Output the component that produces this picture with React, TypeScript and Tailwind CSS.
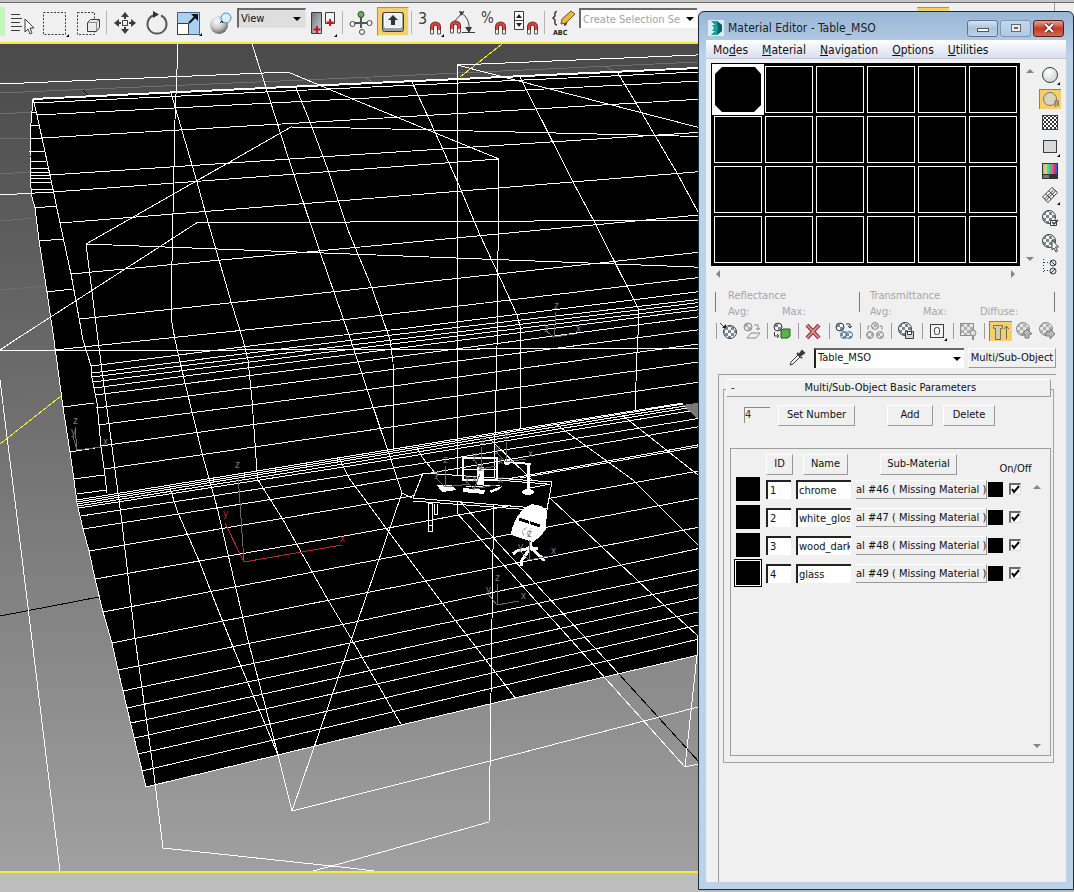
import { ReactNode } from "react";
import { twMerge } from "tailwind-merge";

const WALL_ROWS = [
  "33,103 350,88 720,71",
  "37,115 350,99 720,80",
  "42,138 350,120 720,98",
  "50,175 350,155 720,131",
  "60,223 350,200 720,170",
  "71,274 350,248 720,213",
  "80,319 350,290 720,250",
  "54,350 83,347 350,319 720,275",
  "91,366 306,339 400,329 720,289",
  "92,373 400,334 720,297",
  "92,377 400,339 720,300",
  "93,382 400,343 720,304",
  "94,388 400,348 720,307",
  "95,395 350,363 720,314",
  "96,408 350,375 720,327",
  "98,425 350,392 720,341",
  "101,446 350,411 720,359",
  "104,469 350,433 720,379",
];

const BAND_ROWS = [
  "77,500 350,456 683,403",
  "77,502 350,458 683,404",
  "77,504 350,460 685,406",
  "78,506 350,463 687,408",
  "79,508 350,466 690,411",
];

const FLOOR_ROWS = [
  "81,516 350,475 720,415",
  "83,529 350,487 720,423",
  "89,551 350,507 720,441",
  "520,478 720,443",
  "95,579 350,535 720,467",
  "103,612 350,565 720,494",
  "112,643 350,596 720,523",
  "118,670 350,623 720,544",
  "123,691 350,643 720,565",
  "127,708 350,660 720,580",
  "131,723 350,675 720,593",
  "135,738 350,690 720,607",
  "138,754 350,706 720,620",
  "142,771 350,722 720,634",
  "146,787 278,755 401,725 515,698 720,650",
];

const COLUMNS = [
  // wall
  "33,99 37,115 42,138 50,175 60,223 71,274 83,340 91,366 92,378 97,403 101,447 104,468 107,493",
  "171,93 197,182 208,222 219,260 232,305 243,340 248,360 252,400 257,472 258,480 282,518 328,600 352,640 402,726",
  "178,44 175,120 173,213 171,310 172,323 175,340 185,383 203,457 217,507 248,640 278,755 292,811",
  "296,88 310,122 328,170 348,230 372,288 390,340 393,362 394,449",
  "412,82 435,132 458,183 480,235 501,280 517,315 521,330 520,429",
  "520,77 573,182 595,223 638,308 639,317 637,353 635,411",
  "618,73 643,115 677,173 698,212 720,255",
  // floor
  "169,485 178,513 200,563 213,597 233,647 278,755",
  "339,458 349,478 400,547 455,620 516,699",
  "417,447 422,457 435,473 466,508 569,620 618,673",
  "488,437 532,480 550,498 653,595 697,635",
  "557,425 633,480 698,545",
  "622,415 698,475",
];

const LEFT_EDGE =
  "33,99 31,123 30,157 30,178 32,197 35,208 39,240 47,292 54,340 63,407 70,452 74,480 77,503 83,529 89,551 95,579 103,612 112,643 118,670 127,708 138,754 146,787";

const RUNGS = [
  "32,112 36,112",
  "31,125 39,125",
  "30,139 42,138",
  "29,152 44,151",
  "30,162 46,161",
  "30,169 48,168",
  "30,173 49,172",
  "30,176 50,175",
  "30,179 50,178",
  "31,183 52,182",
  "31,190 53,189",
  "35,208 56,206",
  "39,241 63,239",
  "47,292 72,289",
  "63,407 94,403",
  "70,452 101,447",
  "74,479 104,475",
  "77,494 107,490",
];

const BOXES = [
  "0,84 288,72 350,98 499,159",
  "0,195 53,192 499,159",
  "0,351 720,348",
  "0,350 15,340 198,222 350,222 720,220",
  "86,244 291,127 350,128 720,137",
  "86,244 350,254 720,268",
  "86,244 98,340 112,447 122,523 135,638 153,767 163,848 350,868 374,871",
  "499,159 497,347 494,480 492,620 490,767 489,822 350,861 313,871",
  "252,44 262,75 288,157 320,252 350,338 402,493 292,811",
  "402,493 412,498",
  "457,65 720,54",
  "457,65 720,133",
  "457,65 457,513 685,767 697,655 697,635",
  "292,811 490,761 698,707",
  "685,767 698,764",
  "0,380 7,437 17,517 32,640 60,871",
];

const DIM_GRID = [
  "0,93 350,78 720,61",
  "0,114 31,112",
  "0,139 30,138",
  "0,174 29,172",
  "0,221 36,218",
  "0,290 46,286",
  "364,77 374,83",
  "604,66 616,72",
  "0,402 55,398",
];

// origin, then the end of each axis
const TRIPODS = [
  { o: [77, 450], z: [75, 427], y: [73, 436], x: [101, 447] },
  { o: [554, 337], z: [556, 312], y: [546, 331], x: [574, 334] },
  { o: [497, 605], z: [497, 584], y: [488, 594], x: [519, 601] },
  { o: [529, 560], z: [529, 540], y: [520, 551], x: [549, 556] },
  { o: [481, 469], z: [482, 447], y: [474, 460], x: [496, 466] },
  { o: [506, 462], z: [506, 442], y: [497, 453], x: [526, 459] },
  { o: [445, 487], z: [445, 466], y: [436, 478], x: [470, 484] },
  { o: [474, 489], z: [480, 474], y: [467, 482], x: [496, 485] },
];

const Lines = ({ items }: { items: string[] }) => (
  <>
    {items.map((points) => (
      <polyline key={points} points={points} />
    ))}
  </>
);

const Viewport = () => (
  <svg
    className="block h-full w-full"
    viewBox="0 44 1074 827"
    preserveAspectRatio="xMinYMin slice"
    fill="none"
    shapeRendering="crispEdges"
    role="img"
    aria-label="Perspective viewport"
  >
    <g stroke="#6e6e6e">
      <Lines items={DIM_GRID} />
    </g>
    <polyline points="83,90 89,96" stroke="#000" />
    <polyline points="0,616 99,597" stroke="#000" />
    <polyline points="618,673 720,785" stroke="#000" />
    <polygon
      fill="#000"
      points={`${LEFT_EDGE} 278,755 401,725 515,698 697,655 720,650 720,67`}
    />
    <polygon fill="#7a7a7a" points="682,405 720,400 720,432 698,419" />
    <g stroke="#f4ee2c">
      <polyline points="0,444 61,396" />
      <polyline points="502,44 460,77" />
    </g>
    <g stroke="#fff">
      <polyline points="33,99 350,84 720,67" strokeWidth={2} />
      <polyline points={LEFT_EDGE} />
      <Lines items={WALL_ROWS} />
      <Lines items={BAND_ROWS} />
      <Lines items={FLOOR_ROWS} />
      <Lines items={RUNGS} />
      <Lines items={COLUMNS} />
      <Lines items={BOXES} />
    </g>

    {/* desk */}
    <g stroke="#fff">
      <polygon points="413,498 423,473 552,482 547,509" fill="#000" />
      <polyline points="413,501 546,511 548,509" />
      <rect x="428" y="503" width="4" height="22" />
      <rect x="428" y="525" width="4" height="6" />
      <polyline points="434,504 434,514 437,514 437,504" />
      <polyline points="497,480 547,484" />
      <rect x="463" y="458" width="34" height="22" strokeWidth={2} />
      <polyline points="463,469 497,470" />
      <polyline points="507,462 531,464" strokeWidth={2} />
      <polyline points="529,464 528,491" strokeWidth={3} />
      <polyline points="530,488 550,484" />
      <polyline points="466,487 500,485" />
    </g>
    <g fill="#fff">
      <rect x="477" y="467" width="7" height="18" />
      <polygon points="437,485 452,485 456,490 442,492" />
      <polygon points="463,488 485,490 484,494 463,492" />
      <polygon points="489,491 502,486 500,489 491,493" />
      <ellipse cx="528" cy="492" rx="6" ry="3" />
      <circle cx="507" cy="462" r="3" />
    </g>

    {/* chair */}
    <polygon
      fill="#fff"
      points="524,508 532,504 541,506 547,510 546,529 541,536 533,542 520,538 511,535 512,528 517,517"
    />
    <g stroke="#000">
      <polyline points="519,519 540,526" strokeWidth={3} />
      <polyline points="527,527 522,531 524,536" stroke="#bbb" />
      <polyline points="532,528 527,533 530,537" stroke="#bbb" />
      <polyline points="530,518 529,526" stroke="#fff" />
    </g>
    <g stroke="#fff" strokeWidth={3}>
      <polyline points="530,542 531,550" />
      <polyline points="531,548 517,551 513,554" />
      <polyline points="529,550 522,560 521,566" />
      <polyline points="532,549 541,557 544,561" />
      <polyline points="528,547 538,549" />
    </g>

    {/* axis tripods */}
    <g className="font-['Liberation_Sans'] text-[10px]">
      {TRIPODS.map(({ o, x, y, z }) => (
        <g key={o.join()} stroke="#6a6a6a">
          <polyline points={`${z} ${o} ${x}`} />
          <polyline points={`${y} ${o}`} />
          <g fill="#7c7c7c" stroke="none">
            <text x={z[0] - 2} y={z[1] - 3}>z</text>
            <text x={y[0] - 2} y={y[1] - 1}>y</text>
            <text x={x[0] + 2} y={x[1] - 2}>x</text>
          </g>
        </g>
      ))}
      <polyline points="238,474 244,562" stroke="#6a6a6a" />
      <polyline points="225,523 244,562 342,545" stroke="#b5282c" />
      <text x="235" y="468" fill="#7c7c7c">z</text>
      <text x="223" y="517" fill="#b5282c">y</text>
      <text x="340" y="542" fill="#b5282c">x</text>
    </g>
  </svg>
);

/* ---------- shared bits ---------- */

const Icon = ({ size, children }: { size: number; children: ReactNode }) => (
  <svg
    width={size}
    height={size}
    viewBox={`0 0 ${size} ${size}`}
    fill="none"
    stroke="#3c3c3c"
    className="shrink-0"
    aria-hidden="true"
  >
    {children}
  </svg>
);

const Patterns = () => (
  <svg width="0" height="0" className="absolute" aria-hidden="true">
    <defs>
      <pattern id="checker" width="6" height="6" patternUnits="userSpaceOnUse">
        <rect width="6" height="6" fill="#f4f6f8" />
        <rect width="3" height="3" fill="#7d8791" />
        <rect x="3" y="3" width="3" height="3" fill="#7d8791" />
      </pattern>
      <pattern id="checkerDim" width="6" height="6" patternUnits="userSpaceOnUse">
        <rect width="6" height="6" fill="#e8e8e8" />
        <rect width="3" height="3" fill="#aeaeae" />
        <rect x="3" y="3" width="3" height="3" fill="#aeaeae" />
      </pattern>
      <pattern id="checkerFine" width="4" height="4" patternUnits="userSpaceOnUse">
        <rect width="4" height="4" fill="#fff" />
        <rect width="2" height="2" fill="#333" />
        <rect x="2" y="2" width="2" height="2" fill="#333" />
      </pattern>
      <radialGradient id="ball" cx="0.4" cy="0.3" r="0.8">
        <stop offset="0" stopColor="#fff" />
        <stop offset="0.5" stopColor="#c8c8c8" />
        <stop offset="1" stopColor="#444" />
      </radialGradient>
      <radialGradient id="ballLight" cx="0.4" cy="0.3" r="0.8">
        <stop offset="0" stopColor="#fff" />
        <stop offset="1" stopColor="#c9ced4" />
      </radialGradient>
      <linearGradient id="shade" x1="0" y1="0" x2="1" y2="1">
        <stop offset="0" stopColor="#6e7378" />
        <stop offset="1" stopColor="#cfd3d8" />
      </linearGradient>
    </defs>
  </svg>
);

type BallProps = { cx: number; cy: number; r: number; dim?: boolean; blue?: boolean };

const Ball = ({ cx, cy, r, dim, blue }: BallProps) => (
  <circle
    cx={cx}
    cy={cy}
    r={r}
    fill={dim ? "url(#checkerDim)" : "url(#checker)"}
    stroke={blue ? "#3c86bd" : dim ? "#8d8d8d" : "#3b424a"}
  />
);

const Flyout = ({ x, y }: { x: number; y: number }) => (
  <path d={`M${x} ${y}v-3l-3 3z`} fill="#000" stroke="none" />
);

const Magnet = ({ x, y }: { x: number; y: number }) => (
  <g transform={`translate(${x} ${y})`}>
    <path d="M2 11V5a3.500 3.500 0 0 1 7 0v6" stroke="#7c2020" strokeWidth="4" />
    <path d="M2 11V5a3.500 3.500 0 0 1 7 0v6" stroke="#e04a44" strokeWidth="2" />
    <path d="M1 10h2M8 10h2" stroke="#f5f5f5" strokeWidth="4" />
    <path d="M0.500 8v4h3V8M7.500 8v4h3V8" stroke="#555" strokeWidth="1" />
  </g>
);

const Arrow = ({ dir, dark }: { dir: "up" | "down" | "left" | "right"; dark?: boolean }) => {
  const shapes = {
    up: "M1 6h8L5 2z",
    down: "M1 3h8L5 7z",
    left: "M7 1v8L3 5z",
    right: "M3 1v8l4-4z",
  };
  return (
    <svg width="10" height="10" viewBox="0 0 10 10" className="shrink-0" aria-hidden="true">
      <path d={shapes[dir]} fill={dark ? "#000" : "#868686"} />
    </svg>
  );
};

/* ---------- main toolbar ---------- */

type ToolProps = { label: string; className?: string; children: ReactNode };

const Tool = ({ label, className, children }: ToolProps) => (
  <button
    type="button"
    aria-label={label}
    className={twMerge("flex w-8 shrink-0 items-center justify-center", className)}
  >
    {children}
  </button>
);

const ToolSeparator = () => <span className="mx-0.5 my-2 w-px shrink-0 bg-[#b4b4b4]" />;

const Toolbar = () => (
  <header className="flex h-[42px] shrink-0 border-t-2 border-[#c3c3c3] bg-[#f0f0f0]">
    <div className="flex flex-1 overflow-hidden border-t border-[#6b6b6b]">
      <span className="mt-1 mb-1.5 w-[5px] shrink-0 bg-[#c3f5bd]" />
      <Tool label="Select by Name" className="w-[33px]">
        <Icon size={26}>
          <path d="M2 4.500h9M2 8.500h11M2 12.500h9M2 16.500h11M2 20.500h9" />
          <path d="M16 9v13l3-3 2 5 2-1-2-5h4z" fill="#fff" />
        </Icon>
      </Tool>
      <Tool label="Rectangular Selection Region" className="w-[33px]">
        <Icon size={28}>
          <path d="M2.500 3.500h22v22h-22z" strokeDasharray="2 1.500" />
          <Flyout x={28} y={28} />
        </Icon>
      </Tool>
      <Tool label="Window / Crossing" className="w-[33px]">
        <Icon size={26}>
          <path d="M2.500 2.500h17v22h-17z" strokeDasharray="2 1.500" />
          <path d="M12.500 12.500l3-3h9v8l-3 4h-9z" fill="#e8eaec" />
          <path d="M12.500 12.500h9v9M21.500 12.500l3-3" stroke="#8a8a8a" />
        </Icon>
      </Tool>
      <ToolSeparator />
      <Tool label="Select and Move">
        <Icon size={24}>
          <path d="M9.500 9.500h5v5h-5z" />
          <path
            d="M12 1l4 5h-3v2h-2V6H8zM12 23l4-5h-3v-2h-2v2H8zM1 12l5-4v3h2v2H6v3zM23 12l-5-4v3h-2v2h2v3z"
            fill="#3c3c3c"
            stroke="none"
          />
        </Icon>
      </Tool>
      <Tool label="Select and Rotate">
        <Icon size={24}>
          <path d="M8 4.500a9.500 9.500 0 1 0 8 0" strokeWidth="2" stroke="#555" />
          <path d="M8 0v7l6-3.500z" fill="#333" stroke="none" />
        </Icon>
      </Tool>
      <Tool label="Select and Scale">
        <Icon size={26}>
          <path d="M1.500 2.500h22v22h-22z" fill="#a9d0ee" stroke="#3a6186" />
          <path d="M1.500 13.500h11v11h-11z" fill="#fff" />
          <path d="M13 13l7-7" strokeWidth="2" stroke="#111" />
          <path d="M22 4v7l-7-7z" fill="#111" stroke="none" />
          <Flyout x={26} y={26} />
        </Icon>
      </Tool>
      <Tool label="Select and Place">
        <Icon size={24}>
          <circle cx="10" cy="14" r="9" fill="url(#ball)" stroke="none" />
          <circle cx="17" cy="7" r="5" fill="#d8eefb" stroke="#3f8fc4" />
          <path d="M11 12l2-2 1 2" stroke="#111" />
        </Icon>
      </Tool>
      <div className="relative mt-[5px] h-5 w-[69px] shrink-0">
        <select
          aria-label="Reference Coordinate System"
          className="h-full w-full appearance-none border border-t-2 border-l-2 border-[#e3e3e3] border-t-[#696969] border-l-[#696969] bg-[#dedede] pt-px pl-0.5"
        >
          <option>View</option>
        </select>
        <span className="pointer-events-none absolute top-1.5 right-1">
          <Arrow dir="down" dark />
        </span>
      </div>
      <Tool label="Use Pivot Point Center" className="w-[34px]">
        <Icon size={28}>
          <path d="M2.500 3.500h10v21h-10z" fill="url(#shade)" />
          <path d="M16.500 3.500h9v11h-9z" fill="#f4f4f4" />
          <path d="M8 17v7M4.500 20.500h7M21 10v7M17.500 13.500h7" stroke="#c8141e" strokeWidth="2" />
          <Flyout x={28} y={28} />
        </Icon>
      </Tool>
      <ToolSeparator />
      <Tool label="Select and Manipulate">
        <Icon size={24}>
          <path d="M12 6v11M5 12h14" strokeWidth="2" stroke="#555" />
          <circle cx="12" cy="3.500" r="3" fill="#69b35a" />
          <circle cx="3.500" cy="13" r="2.500" fill="#fff" />
          <circle cx="20.500" cy="12" r="2.500" fill="#fff" />
          <circle cx="13" cy="21" r="2.500" fill="#fff" />
        </Icon>
      </Tool>
      <Tool
        label="Keyboard Shortcut Override Toggle"
        className="mt-1 mb-1.5 border border-[#e8e8e8] border-t-[#a09368] border-l-[#a09368] bg-[#f5cf6a]"
      >
        <Icon size={24}>
          <rect x="1.500" y="2.500" width="21" height="19" rx="2" fill="#9aa0a6" />
          <rect x="3.500" y="3.500" width="17" height="14" rx="1" fill="#eceef0" stroke="#fff" />
          <path d="M12 5l5 5h-3v5h-4v-5H7z" fill="#333" stroke="none" />
        </Icon>
      </Tool>
      <ToolSeparator />
      <Tool label="Snaps Toggle">
        <Icon size={28}>
          <text x="2" y="15" fontSize="16" fill="#3c3c3c" stroke="none">3</text>
          <Magnet x={14} y={13} />
          <Flyout x={28} y={28} />
        </Icon>
      </Tool>
      <Tool label="Angle Snap Toggle">
        <Icon size={28}>
          <path d="M4 15L16 2M13 4c6 3 9 10 8 19M14 23.500h13" />
          <path d="M11 2l5 1-3 4zM17 18h7l-3 6z" fill="#3c3c3c" stroke="none" />
          <Magnet x={2} y={12} />
        </Icon>
      </Tool>
      <Tool label="Percent Snap Toggle">
        <Icon size={28}>
          <text x="1" y="14" fontSize="15" fill="#3c3c3c" stroke="none">%</text>
          <Magnet x={15} y={13} />
        </Icon>
      </Tool>
      <Tool label="Spinner Snap Toggle">
        <Icon size={28}>
          <path d="M2.500 2.500h9v18h-9zM2.500 11.500h9" fill="#fff" />
          <path d="M4 9h6L7 5zM4 14h6l-3 4z" fill="#222" stroke="none" />
          <Magnet x={15} y={13} />
        </Icon>
      </Tool>
      <ToolSeparator />
      <Tool label="Edit Named Selection Sets">
        <Icon size={28}>
          <path
            d="M8 2.500c-3 0-2 3-2 4.500l-2 2 2 2c0 2-1 5 2 5M16 8c2 0 0 3 3 3-3 1 0 5-4 5"
            strokeWidth="1.500"
          />
          <path d="M12 15l1-5 9-8 4 3-9 9z" fill="#eab93c" stroke="#6b5426" />
          <text x="4" y="26" fontSize="7" fontWeight="bold" fill="#222" stroke="none">ABC</text>
        </Icon>
      </Tool>
      <div className="relative mt-[5px] h-5 w-[118px] shrink-0">
        <input
          aria-label="Named Selection Sets"
          placeholder="Create Selection Se"
          className="h-full w-full border-t-2 border-l-2 border-[#696969] bg-white px-0.5 placeholder:text-[#a2a2a2]"
        />
        <span className="pointer-events-none absolute top-1.5 right-0.5">
          <Arrow dir="down" dark />
        </span>
      </div>
      <span className="mt-1 ml-auto h-8 w-8 shrink-0 border-t border-[#a09368] bg-[#f5cf6a]" />
      <span className="ml-[105px] w-px shrink-0 bg-[#9a9a9a]" />
      <span className="w-[19px] shrink-0" />
    </div>
  </header>
);

/* ---------- material editor ---------- */

const raised =
  "border border-white border-r-[#9a9a9a] border-b-[#9a9a9a] bg-[#f0f0f0] pt-px text-center whitespace-nowrap";
const sunken =
  "border-t-2 border-l-2 border-t-[#696969] border-l-[#222] bg-white px-0.5 outline-none";

const menus = [
  ["Mo", "d", "es"],
  ["", "M", "aterial"],
  ["", "N", "avigation"],
  ["", "O", "ptions"],
  ["", "U", "tilities"],
];

const TitleBar = () => (
  <div className="flex h-7 shrink-0 items-center gap-0.5 pt-1 pr-0.5">
    <svg width="16" height="16" viewBox="0 0 16 16" className="mx-0.5 shrink-0" aria-hidden="true">
      <rect width="16" height="16" fill="#dcecf3" />
      <path d="M3 1h6l5 4v6l-5 4H3l4-4H4l2-3-2-3h3z" fill="#19a09a" />
      <path d="M9 1l5 4v6l-5 4 1-7z" fill="#0b5e62" />
    </svg>
    <h1 className="flex-1 text-xs text-[#1c1c1c]">Material Editor - Table_MSO</h1>
    <button
      type="button"
      aria-label="Minimize"
      className="flex h-[17px] w-[31px] items-center justify-center rounded-[3px] border border-[#5d7590] bg-linear-to-b from-[#d5e3f2] via-[#a9c2de] to-[#bcd3ec]"
    >
      <span className="mt-1 h-1 w-3 border border-[#555] bg-white" />
    </button>
    <button
      type="button"
      aria-label="Maximize"
      className="flex h-[17px] w-[31px] items-center justify-center rounded-[3px] border border-[#8098b3] bg-linear-to-b from-[#c3d6eb] to-[#b0c9e4]"
    >
      <span className="flex h-2 w-2.5 items-center justify-center border border-[#666] bg-[#e8eef5]">
        <span className="h-0.5 w-1 bg-[#666]" />
      </span>
    </button>
    <button
      type="button"
      aria-label="Close"
      className="flex h-[17px] w-[31px] items-center justify-center rounded-[3px] border border-[#5b1b16] bg-linear-to-b from-[#e0a193] via-[#c33a22] to-[#d4694c]"
    >
      <svg width="12" height="10" viewBox="0 0 12 10" aria-hidden="true">
        <path d="M2 1l8 8M10 1L2 9" stroke="#5a2a26" strokeWidth="4" />
        <path d="M2 1l8 8M10 1L2 9" stroke="#fff" strokeWidth="2" />
      </svg>
    </button>
  </div>
);

const Slots = () => (
  <div className="grid grid-cols-[repeat(6,48px)] grid-rows-[repeat(4,47px)] gap-[3px] bg-black p-[3px]">
    {Array.from({ length: 24 }, (_, i) =>
      i === 0 ? (
        <button
          key={i}
          type="button"
          aria-label="Sample slot 1"
          className="bg-white outline-2 outline-white"
        >
          <svg width="48" height="47" viewBox="0 0 48 47" aria-hidden="true">
            <path d="M8 1h33l6 7v31l-7 7H8l-7-7V8z" fill="#000" />
          </svg>
        </button>
      ) : (
        <button
          key={i}
          type="button"
          aria-label={`Sample slot ${i + 1}`}
          className="border border-white"
        />
      )
    )}
  </div>
);

const sideTools: { label: string; active?: boolean; icon: ReactNode }[] = [
  {
    label: "Sample Type",
    icon: (
      <>
        <circle cx="10" cy="10" r="7.500" fill="url(#ballLight)" />
        <Flyout x={20} y={20} />
      </>
    ),
  },
  {
    label: "Backlight",
    active: true,
    icon: (
      <>
        <circle cx="9" cy="9" r="6.500" fill="#d9d3c2" stroke="#7c7765" />
        <path d="M14.500 10v7M17 10v6" stroke="#8f8a7b" strokeWidth="2" />
      </>
    ),
  },
  {
    label: "Background",
    icon: <rect x="2.500" y="2.500" width="15" height="14" fill="url(#checkerFine)" />,
  },
  {
    label: "Sample UV Tiling",
    icon: (
      <>
        <rect x="3.500" y="3.500" width="13" height="12" fill="#d5d9dd" />
        <Flyout x={20} y={20} />
      </>
    ),
  },
  {
    label: "Video Color Check",
    icon: (
      <g stroke="none">
        <rect x="2" y="2" width="16" height="16" fill="#333" />
        <path d="M3 3h2v10H3z" fill="#b9bcc0" />
        <path d="M5 3h2v10H5z" fill="#e8d73c" />
        <path d="M7 3h2v10H7z" fill="#51cfd6" />
        <path d="M9 3h2v10H9z" fill="#56c454" />
        <path d="M11 3h2v10h-2z" fill="#dc5fce" />
        <path d="M13 3h2v10h-2z" fill="#e2453d" />
        <path d="M15 3h2v10h-2z" fill="#4a58d8" />
        <path d="M3 14h6v3H3z" fill="#777" />
      </g>
    ),
  },
  {
    label: "Make Preview",
    icon: (
      <>
        <path d="M2.500 12L12 2.500l5.500 5L8 17.500z" fill="#f4f4f4" />
        <path d="M4.500 14L14 4.500M6 15.500L15.500 6M6 9l5 5M9 6l5 5" />
        <Flyout x={20} y={20} />
      </>
    ),
  },
  {
    label: "Options",
    icon: (
      <>
        <Ball cx={9} cy={8} r={6.5} />
        <path d="M10.500 11.500h6v5h-6z" fill="#fff" />
        <path d="M12 13l2 2 4-4" strokeWidth="1.500" />
      </>
    ),
  },
  {
    label: "Select by Material",
    icon: (
      <>
        <Ball cx={9} cy={8} r={6.5} />
        <path d="M12 7v10l2-2 2 4 1.500-1-2-4h3z" fill="#fff" />
      </>
    ),
  },
  {
    label: "Material/Map Navigator",
    icon: (
      <>
        <path d="M3.500 2v15M4 5.500h6M4 13.500h6" strokeDasharray="1 2" />
        <circle cx="13" cy="6" r="3" fill="#e2e5e8" />
        <circle cx="13" cy="14" r="3" fill="#e2e5e8" />
        <path d="M11 4l4 4M11 16l4-4" />
      </>
    ),
  },
];

const SideTools = () => (
  <div className="flex flex-col gap-1 pt-0.5">
    {sideTools.map(({ label, active, icon }) => (
      <button
        key={label}
        type="button"
        aria-label={label}
        className={twMerge(
          "flex h-5 w-[22px] items-center justify-center",
          active && "border-t border-l border-[#8b8260] bg-[#f6cf68]"
        )}
      >
        <Icon size={20}>{icon}</Icon>
      </button>
    ))}
  </div>
);

const materialTools: { label: string; active?: boolean; icon: ReactNode }[][] = [
  [
    {
      label: "Get Material",
      icon: (
        <>
          <Ball cx={11} cy={11} r={6.5} />
          <path d="M1 2l4 4" />
          <path d="M7 7V3L3 7z" fill="#222" stroke="none" />
        </>
      ),
    },
    {
      label: "Put Material to Scene",
      icon: (
        <g stroke="#8d8d8d">
          <Ball cx={6} cy={6} r={4} dim />
          <path d="M12 4h4v5M14 7l2 2 2-2M5 17l4-5h9l-4 5z" />
        </g>
      ),
    },
  ],
  [
    {
      label: "Assign Material to Selection",
      icon: (
        <>
          <Ball cx={6} cy={6} r={4} />
          <path d="M2.500 11v4h4M5 13l2 2-2 2" />
          <path d="M9 10l2-2h7v7l-2 2H9z" fill="#5bb04e" stroke="#23591c" />
        </>
      ),
    },
  ],
  [
    {
      label: "Reset Map",
      icon: (
        <>
          <path d="M4 4l12 13M16 4L4 17" stroke="#6e1c22" strokeWidth="4" />
          <path d="M4 4l12 13M16 4L4 17" stroke="#e08a8f" strokeWidth="2" />
        </>
      ),
    },
  ],
  [
    {
      label: "Make Material Copy",
      icon: (
        <>
          <Ball cx={6} cy={6} r={4} />
          <path d="M12 3h4v4M14 5l2 2 2-2" />
          <Ball cx={10} cy={14} r={3.5} blue />
          <Ball cx={15} cy={14} r={3.5} blue />
        </>
      ),
    },
  ],
  [
    {
      label: "Make Unique",
      icon: (
        <g stroke="#8d8d8d">
          <Ball cx={10} cy={5} r={3.5} dim />
          <Ball cx={5} cy={14} r={3.5} dim />
          <Ball cx={15} cy={14} r={3.5} dim />
          <path d="M3 9V5h2M17 9V5h-2" />
        </g>
      ),
    },
  ],
  [
    {
      label: "Put to Library",
      icon: (
        <>
          <Ball cx={9} cy={8} r={6.5} />
          <path d="M9.500 10.500h8v7h-8z" fill="#cfd2d6" />
          <path d="M11.500 10.500h4v3h-4z" fill="#fff" />
        </>
      ),
    },
  ],
  [
    {
      label: "Material ID Channel",
      icon: (
        <>
          <rect x="3.500" y="3.500" width="13" height="13" fill="#f4f4f4" />
          <rect x="7.500" y="6.500" width="5" height="7" rx="2" />
          <Flyout x={20} y={20} />
        </>
      ),
    },
  ],
  [
    {
      label: "Show Shaded Material",
      icon: (
        <>
          <rect x="2.500" y="2.500" width="13" height="12" fill="url(#checkerDim)" stroke="#8d8d8d" />
          <circle cx="15" cy="12" r="3" fill="#ddd" stroke="#8d8d8d" />
          <path d="M15 15v4" stroke="#8d8d8d" strokeWidth="2" />
        </>
      ),
    },
  ],
  [
    {
      label: "Show End Result",
      active: true,
      icon: (
        <>
          <path d="M2.500 3.500h9v3h-2v11h-5v-11h-2z" fill="#d2cbb3" stroke="#77705a" />
          <path d="M15.500 17V4M13 7l2.500-3L18 7" stroke="#6e6750" />
        </>
      ),
    },
    {
      label: "Go to Parent",
      icon: (
        <>
          <Ball cx={9} cy={8} r={6.5} dim />
          <path d="M13 8l5 5h-3v4h-4v-4H8z" fill="#b8b8b8" stroke="#7a7a7a" />
        </>
      ),
    },
    {
      label: "Go Forward to Sibling",
      icon: (
        <>
          <Ball cx={9} cy={8} r={6.5} dim />
          <path d="M9 11h4V8l5 5-5 5v-3H9z" fill="#b8b8b8" stroke="#7a7a7a" />
        </>
      ),
    },
  ],
];

const MaterialTools = () => (
  <div className="flex h-5">
    {materialTools.map((group) => (
      <div key={group[0].label} className={twMerge("flex", group.length === 2 && "pr-0.5")}>
        <span
          className={twMerge("my-0.5 ml-0.5 w-px bg-[#9c9c9c]", group.length === 3 && "mr-1")}
        />
        {group.map(({ label, active, icon }) => (
          <button
            key={label}
            type="button"
            aria-label={label}
            className={twMerge(
              "flex w-7 items-center justify-center",
              group.length > 1 && "w-[23px]",
              active && "border-t border-l border-[#8b8260] bg-[#f6cf68]"
            )}
          >
            <Icon size={20}>{icon}</Icon>
          </button>
        ))}
      </div>
    ))}
  </div>
);

const LightInfo = () => (
  <div className="flex h-[33px] items-start pt-1 text-[#a5a5a5]">
    <div className="grid h-5 w-36 grid-cols-[54px_1fr] border-l border-[#787878] pl-3 leading-4">
      <span className="col-span-2 -mt-1">Reflectance</span>
      <span>Avg:</span>
      <span>Max:</span>
    </div>
    <div className="grid h-5 w-[196px] grid-cols-[53px_57px_1fr] border-x border-[#787878] pl-2.5 leading-4">
      <span className="col-span-3 -mt-1">Transmittance</span>
      <span>Avg:</span>
      <span>Max:</span>
      <span>Diffuse:</span>
    </div>
  </div>
);

const rows = [
  { id: 1, name: "chrome", material: "al #46 ( Missing Material )" },
  { id: 2, name: "white_glos", material: "al #47 ( Missing Material )" },
  { id: 3, name: "wood_dark", material: "al #48 ( Missing Material )" },
  { id: 4, name: "glass", material: "al #49 ( Missing Material )" },
];

const SubMaterials = () => (
  <table className="table-fixed self-start">
    <colgroup>
      <col className="w-[30px]" />
      <col className="w-[30px]" />
      <col className="w-[60px]" />
      <col className="w-[132px]" />
      <col className="w-[21px]" />
      <col className="w-[30px]" />
    </colgroup>
    <thead>
      <tr className="h-[22px]">
        <td />
        <th className="p-0 text-left font-normal">
          <button type="button" className={twMerge(raised, "block h-[21px] w-[27px]")}>ID</button>
        </th>
        <th className="p-0 pl-[7px] text-left font-normal">
          <button type="button" className={twMerge(raised, "block h-[21px] w-[45px]")}>Name</button>
        </th>
        <th className="p-0 pl-6 font-normal">
          <button type="button" className={twMerge(raised, "block h-[21px] w-[77px]")}>Sub-Material</button>
        </th>
        <th colSpan={2} className="p-0 pl-1 align-bottom leading-3 font-normal">On/Off</th>
      </tr>
    </thead>
    <tbody>
      {rows.map(({ id, name, material }) => (
        <tr key={id} className="h-7">
          <td className="p-0">
            <button
              type="button"
              aria-label={`Preview ${name}`}
              className={twMerge(
                "block size-6 bg-black",
                id === rows.length && "ring-2 ring-black outline-1 outline-white"
              )}
            />
          </td>
          <td className="p-0">
            <input
              aria-label={`ID of ${name}`}
              defaultValue={id}
              className={twMerge(sunken, "block h-[19px] w-[25px] border-t-[#222]")}
            />
          </td>
          <td className="p-0">
            <input
              aria-label={`Name ${id}`}
              defaultValue={name}
              className={twMerge(sunken, "block h-[19px] w-[55px] border-t-[#222] px-px")}
            />
          </td>
          <td className="p-0">
            <button
              type="button"
              className={twMerge(raised, "block h-[19px] w-[131px] border-l-0 text-left")}
            >
              {material}
            </button>
          </td>
          <td className="p-0">
            <button type="button" aria-label={`Color of ${name}`} className="block size-[15px] bg-black" />
          </td>
          <td className="p-0">
            <label className="relative block size-3">
              <input
                type="checkbox"
                defaultChecked
                aria-label={`Enable ${name}`}
                className="peer block size-3 appearance-none border border-t-2 border-l-2 border-[#696969] border-r-[#ddd] border-b-[#ddd] bg-white"
              />
              <svg
                viewBox="0 0 12 12"
                className="pointer-events-none absolute inset-0 hidden size-3 peer-checked:block"
                aria-hidden="true"
              >
                <path d="M3 6l2 3 5-6" stroke="#000" strokeWidth="2" fill="none" />
              </svg>
            </label>
          </td>
        </tr>
      ))}
    </tbody>
  </table>
);

const MaterialEditor = () => (
  <section className="absolute top-[11px] right-0 bottom-0.5 flex w-[376px] flex-col rounded-t-md border border-[#1d2a38] bg-linear-to-b from-[#9ab6d5] to-[#bad2ea] to-5% px-[7px] pb-[7px]">
    <TitleBar />
    <div className="flex flex-1 flex-col bg-[#f0f0f0]">
      <nav className="flex h-[19px] items-center gap-3.5 border-b border-[#c2c4d6] bg-linear-to-b from-white to-[#d8deef] pt-0.5 pl-[7px] text-xs">
        {menus.map(([before, key, after]) => (
          <a key={key} href="#" className="text-[#111]">
            {before}
            <u>{key}</u>
            {after}
          </a>
        ))}
      </nav>

      <div className="flex px-[5px] pt-1">
        <div>
          <Slots />
          <div className="flex h-4 items-center justify-between px-0.5">
            <Arrow dir="left" />
            <Arrow dir="right" />
          </div>
        </div>
        <div className="flex h-[203px] w-5 flex-col items-center justify-between pt-1 pb-0.5">
          <Arrow dir="up" />
          <Arrow dir="down" />
        </div>
        <SideTools />
      </div>

      <div className="pt-1.5 pl-[9px]">
        <LightInfo />
      </div>
      <div className="pl-2">
        <MaterialTools />
      </div>

      <div className="flex h-[33px] items-center justify-end gap-1 pr-2.5">
        <button type="button" aria-label="Pick Material from Object" className="mr-1">
          <Icon size={18}>
            <path d="M2 16l1-3 7-7 2 2-7 7z" fill="#f0f0f0" />
            <path d="M9 4l5 5M11 6l3-4 2 2-4 3z" strokeWidth="2" fill="#3c3c3c" />
          </Icon>
        </button>
        <div className="relative h-5 w-[150px]">
          <input
            aria-label="Material name"
            defaultValue="Table_MSO"
            className={twMerge(sunken, "h-full w-full pb-0.5")}
          />
          <span className="pointer-events-none absolute top-1.5 right-0.5">
            <Arrow dir="down" dark />
          </span>
        </div>
        <button type="button" className={twMerge(raised, "h-5 w-[88px]")}>Multi/Sub-Object</button>
      </div>

      <div className="mr-2.5 ml-3 flex flex-1 flex-col border-t border-l border-[#9c9c9c] pt-1 pr-0.5 pl-1">
        <button
          type="button"
          className={twMerge(raised, "relative z-10 mx-[3px] -mb-2 flex h-[18px] items-center px-1")}
        >
          <span>-</span>
          <span className="flex-1">Multi/Sub-Object Basic Parameters</span>
        </button>
        <div className="border border-[#a2a2a2] pt-2.5 pr-0.5 pb-1.5 pl-1.5">
          <div className="flex h-[26px] items-center pt-1 pl-3.5">
            <input
              aria-label="Number of materials"
              defaultValue="4"
              readOnly
              className="mr-2 h-4 w-[26px] border-t border-l border-[#8a8a8a] bg-[#f0f0f0] text-[#333]"
            />
            <button type="button" className={twMerge(raised, "h-[21px] w-[77px]")}>Set Number</button>
            <button type="button" className={twMerge(raised, "ml-8 h-[21px] w-[46px]")}>Add</button>
            <button type="button" className={twMerge(raised, "ml-2.5 h-[21px] w-[52px]")}>Delete</button>
          </div>
          <div className="mt-[22px] flex h-[308px] border border-[#9c9c9c] pt-1 pl-[5px]">
            <SubMaterials />
            <div className="-ml-[7px] flex flex-col justify-between pt-[30px] pb-1">
              <Arrow dir="up" />
              <Arrow dir="down" />
            </div>
          </div>
        </div>
      </div>
    </div>
  </section>
);

const App = () => (
  <div className="relative flex h-screen min-h-[780px] flex-col overflow-hidden bg-[#bdbdbd] font-['DejaVu_Sans_Condensed','Noto_Sans',sans-serif] text-[11px] text-[#111]">
    <Patterns />
    <Toolbar />
    <main className="min-h-0 flex-1 border-y-2 border-[#f5e93a] bg-linear-to-b from-[#4a4a4a] to-[#a0a0a0]">
      <Viewport />
    </main>
    <footer className="h-[19px] shrink-0" />
    <MaterialEditor />
  </div>
);

export default App;
